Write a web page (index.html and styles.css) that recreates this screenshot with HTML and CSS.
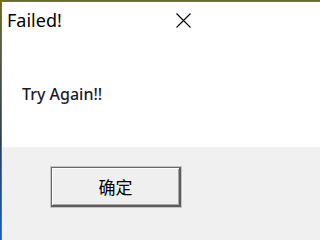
FILE: index.html
```html
<!DOCTYPE html>
<html>
<head>
<meta charset="utf-8">
<link rel="stylesheet" href="styles.css">
</head>
<body>
<div class="window">
  <div class="titlebar">
    <span class="title">Failed!</span>
    <svg class="close" width="15" height="15" viewBox="0 0 15 15">
      <path d="M0.5 0.5 L14.5 14.5 M14.5 0.5 L0.5 14.5" stroke="#000" stroke-width="1.1" fill="none"/>
    </svg>
  </div>
  <div class="content">
    <p class="message">Try Again!!</p>
  </div>
  <div class="footer">
    <button class="ok">确定</button>
  </div>
</div>
</body>
</html>
```
FILE: styles.css
```css
html, body {
  margin: 0;
  padding: 0;
}
body {
  height: 100vh;
  overflow: hidden;
  background: linear-gradient(#6e6a2a, #2a3c5a 60%, #1f5fae);
  padding: 1px 0 0 1px;
  box-sizing: border-box;
}
.window {
  height: 100%;
  border-top: 1px solid #2b7bd3;
  border-left: 1px solid #2b7bd3;
  background: #fff;
  display: flex;
  flex-direction: column;
  box-sizing: border-box;
}
.titlebar {
  width: 206px;
  height: 38px;
  padding: 6px 17px 0 5px;
  box-sizing: border-box;
  display: flex;
  justify-content: space-between;
  align-items: flex-start;
}
.title {
  font-family: "Noto Sans", sans-serif;
  font-size: 18px;
  line-height: 24px;
  color: #000;
}
.close {
  margin-top: 5px;
  display: block;
}
.content {
  height: 107px;
  padding-left: 20px;
  box-sizing: border-box;
  padding-top: 44px;
}
.message {
  margin: 0;
  font-family: "Noto Sans", sans-serif;
  font-size: 16px;
  line-height: 20px;
  color: #1c1c30;
  font-weight: 500;
}
.footer {
  flex: 1;
  background: #f0f0f0;
  padding: 20px 0 0 49px;
}
.ok {
  display: block;
  width: 130px;
  height: 40px;
  margin: 0;
  padding: 0;
  box-sizing: border-box;
  background: #efefef;
  border: 1px solid #6a6a6a;
  border-right: 2px solid #5c5c5c;
  border-bottom: 2px solid #5c5c5c;
  box-shadow: 0 0 0 1px #c4c4c4, inset 1px 1px 0 #ffffff, inset -1px -1px 0 #a8a8a8;
  font-family: "Noto Sans CJK SC", sans-serif;
  font-size: 17px;
  color: #000;
}
```
